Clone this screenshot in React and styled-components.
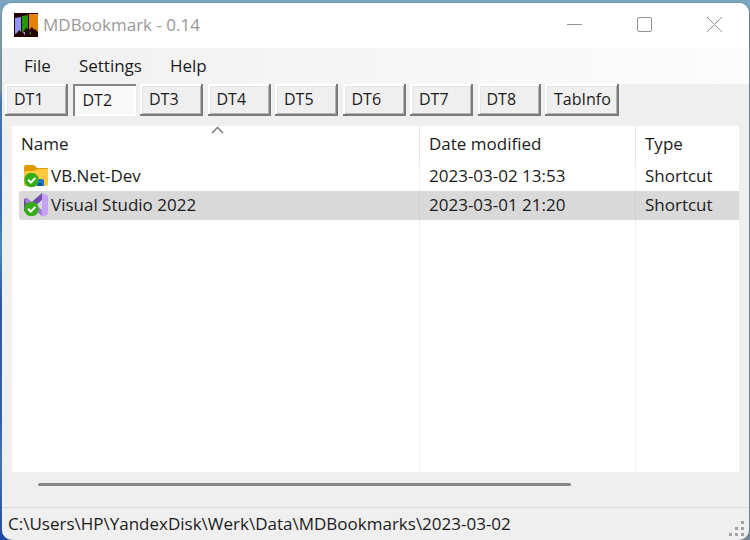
import React, { useState } from "react";
import styled, { createGlobalStyle } from "styled-components";

const GlobalStyle = createGlobalStyle`
  *, *::before, *::after { box-sizing: border-box; }
  body {
    margin: 0;
    font-family: "Open Sans", "Noto Sans", sans-serif;
    font-size: 17px;
    line-height: 24px;
    color: #1b1b1b;
  }
  button, input { font: inherit; color: inherit; }
`;

const Desktop = styled.div`
  display: flex;
  min-height: 100vh;
  padding: 3px 1px 0 2px;
  background: linear-gradient(180deg, #7ba6c2 0, #7ba6c2 12px, transparent 12px),
    linear-gradient(90deg, transparent 50%, #71889a 50%),
    linear-gradient(180deg, #7ba6c2 0, #7c929f 90px, #3c78bd 100px, #2c69b8 200px,
      #4090c4 250px, #2454ac 300px, #2c5cb8 420px, #3c77b8 460px, #1746a8 100%);
`;

const Window = styled.main`
  flex: 1;
  min-width: 0;
  display: flex;
  flex-direction: column;
  overflow: hidden;
  border-radius: 10px;
  background: #efefef;
  box-shadow: 0 0 2px #5e7585;
`;

const TitleBar = styled.header`
  display: flex;
  align-items: center;
  height: 45px;
  padding: 0 0 2px 12px;
  background: #fff;
`;

const Title = styled.h1`
  flex: 1;
  margin: 0 0 0 5px;
  font-size: 17px;
  font-weight: 400;
  line-height: 24px;
  color: #999;
`;

const CaptionButton = styled.button`
  display: grid;
  place-items: center;
  width: 70px;
  height: 43px;
  padding: 0;
  border: 0;
  background: transparent;
  color: #919191;
`;

const MenuBar = styled.nav`
  display: flex;
  height: 36px;
  padding-left: 12px;
  background: linear-gradient(90deg, #f0f0f0, #fcfcfc);
`;

const MenuButton = styled.button`
  padding: 0 10px;
  margin-right: 8px;
  border: 0;
  background: transparent;
`;

const TabStrip = styled.div`
  display: flex;
  justify-content: space-between;
  max-width: 614px;
  height: 32px;
  margin-left: 3px;
`;

const Tab = styled.button`
  width: ${(p) => (p.$wide ? 74 : 63)}px;
  padding: ${(p) => (p.$active ? "0 8px 0 10px" : "0 9px 2px")};
  border: 0;
  font-size: 16px;
  text-align: left;
  white-space: nowrap;
  background: ${(p) => (p.$active ? "#f8f8f8" : "#efefef")};
  box-shadow: ${(p) =>
    p.$active
      ? "inset 2px 2px #858585, inset -2px -2px #fff"
      : "inset -2px -2px #7b7b7b, inset 2px 2px #fff, inset -3px -3px #b4b4b4, inset 3px 3px #e5e5e5"};
`;

const ListPanel = styled.section`
  flex: 1;
  display: flex;
  margin: 10px 10px 0;
  padding-left: 7px;
  background: #fff;
`;

const FileTable = styled.table`
  width: 100%;
  table-layout: fixed;
  border-collapse: separate;
  border-spacing: 0;
`;

const Column = styled.col`
  width: ${(p) => p.$width};
`;

const HeadCell = styled.th`
  position: relative;
  height: 36px;
  padding: 0 0 1px ${(p) => (p.$first ? 2 : 9)}px;
  border-right: ${(p) => (p.$last ? "0" : "1px solid #e5e5e5")};
  text-align: left;
  font-weight: 400;
`;

const SortMark = styled.svg`
  position: absolute;
  top: 0;
  left: calc(50% - 8px);
`;

const Row = styled.tr`
  background: transparent;
`;

const Cell = styled.td`
  height: ${(p) => (p.$fill ? "auto" : "29px")};
  padding: 0 0 2px ${(p) => (p.$first ? 5 : 9)}px;
  border-right: ${(p) => (p.$last ? "0" : "1px solid")};
  border-color: ${(p) => (p.$selected ? "#cdd1d5" : "#eaf2f9")};
  border-radius: ${(p) => (p.$first ? "3px 0 0 3px" : "0")};
  white-space: nowrap;
  background: ${(p) => (p.$selected ? "#d9d9d9" : "transparent")};
`;

const FileName = styled.span`
  display: flex;
  align-items: center;
  gap: 3px;
`;

const ScrollTrack = styled.div`
  height: 35px;
  padding: 11px 36px 0;
`;

const ScrollThumb = styled.div`
  width: 79%;
  height: 3px;
  border-radius: 2px;
  background: #868886;
`;

const StatusBar = styled.footer`
  display: flex;
  justify-content: space-between;
  align-items: flex-end;
  height: 33px;
  padding: 0 3px 3px 6px;
  border-top: 1px solid #d9d9d9;
`;

const StatusText = styled.span`
  padding-bottom: 1px;
`;

function AppLogo() {
  return (
    <svg width="24" height="24" viewBox="0 0 24 24" aria-hidden="true">
      <path fill="#260000" d="M0 0h24v24H0z" />
      <path fill="#8f98ff" d="M1 5l6-1v15l-2-2-2 3-2 1z" />
      <path fill="#249600" d="M8 3l6-1v14l-2-1-2 3-2 2z" />
      <path fill="#e48100" d="M15 1h9v18l-3-3-1 1-2-3-3 3z" />
      <path fill="#8f98ff" d="M9 19h2v4z" />
      <path fill="#249600" d="M15 20l2-1v3z" />
    </svg>
  );
}

function SyncBadge() {
  return (
    <g>
      <circle cx="7.500" cy="16" r="7.300" fill="#34ad16" />
      <path d="M4 15.700l2.800 2.800 4.600-4.600" fill="none" stroke="#fff" strokeWidth="2" />
    </g>
  );
}

function FolderIcon() {
  return (
    <svg width="24" height="24" viewBox="0 0 24 24" aria-hidden="true">
      <path fill="#df9a00" d="M0 3q0-2 2-2h8l3 3h10q1 0 1 1v5H0z" />
      <path fill="#ffc83e" d="M0 9q0-2 2-2h8l4-2h10v15q0 2-2 2H0z" />
      <path fill="#1778cf" d="M13 15h5q2 0 2 2v5h-7z" />
      <path fill="#0753a0" d="M14 19h4v3h-4z" />
      <SyncBadge />
    </svg>
  );
}

function StudioIcon() {
  return (
    <svg width="24" height="24" viewBox="0 0 24 24" aria-hidden="true">
      <path fill="#6844a2" d="M0 6l3-1v14l-3-1z" />
      <path fill="#a579d9" d="M3 5l15 12v6L1 9V6z" />
      <path fill="#704cad" d="M1 15L18 0v7L4 19z" />
      <path fill="#c5a3f3" d="M18 0l5 2q1 1 1 2v16q0 1-1 2l-5 2z" />
      <SyncBadge />
    </svg>
  );
}

const captions = [
  ["Minimize", "M0 7.500h15"],
  ["Maximize", "M2 .5h11q1.500 0 1.500 1.500v11q0 1.500-1.500 1.500H2q-1.500 0-1.500-1.500V2Q.5.5 2 .5z"],
  ["Close", "M0 0l15 15M15 0L0 15"],
];

const tabs = ["DT1", "DT2", "DT3", "DT4", "DT5", "DT6", "DT7", "DT8", "TabInfo"];

const files = [
  { name: "VB.Net-Dev", date: "2023-03-02 13:53", type: "Shortcut", Icon: FolderIcon },
  { name: "Visual Studio 2022", date: "2023-03-01 21:20", type: "Shortcut", Icon: StudioIcon },
];

export default function App() {
  const [activeTab, setActiveTab] = useState("DT2");
  const [selected, setSelected] = useState("Visual Studio 2022");

  return (
    <Desktop>
      <GlobalStyle />
      <Window>
        <TitleBar>
          <AppLogo />
          <Title>MDBookmark - 0.14</Title>
          {captions.map(([label, path]) => (
            <CaptionButton key={label} aria-label={label}>
              <svg width="15" height="15" viewBox="0 0 15 15" fill="none" stroke="currentColor">
                <path d={path} />
              </svg>
            </CaptionButton>
          ))}
        </TitleBar>
        <MenuBar aria-label="Main menu">
          {["File", "Settings", "Help"].map((item) => (
            <MenuButton key={item}>{item}</MenuButton>
          ))}
        </MenuBar>
        <TabStrip role="tablist">
          {tabs.map((tab) => (
            <Tab
              key={tab}
              role="tab"
              aria-selected={activeTab === tab}
              $active={activeTab === tab}
              $wide={tab === "TabInfo"}
              onClick={() => setActiveTab(tab)}
            >
              {tab}
            </Tab>
          ))}
        </TabStrip>
        <ListPanel>
          <FileTable>
            <colgroup>
              <Column $width="401px" />
              <Column $width="216px" />
              <Column $width="auto" />
            </colgroup>
            <thead>
              <tr>
                <HeadCell $first scope="col" aria-sort="ascending">
                  Name
                  <SortMark width="13" height="8" viewBox="0 0 13 8" aria-hidden="true">
                    <path d="M1 7l5.500-5.500L12 7" fill="none" stroke="#777" strokeWidth="1.500" />
                  </SortMark>
                </HeadCell>
                <HeadCell scope="col">Date modified</HeadCell>
                <HeadCell $last scope="col">Type</HeadCell>
              </tr>
            </thead>
            <tbody>
              {files.map(({ name, date, type, Icon }) => {
                const on = selected === name;
                return (
                  <Row key={name} onClick={() => setSelected(name)}>
                    <Cell $first $selected={on}>
                      <FileName>
                        <Icon />
                        {name}
                      </FileName>
                    </Cell>
                    <Cell $selected={on}>{date}</Cell>
                    <Cell $last $selected={on}>{type}</Cell>
                  </Row>
                );
              })}
              <Row aria-hidden="true">
                <Cell $fill />
                <Cell $fill />
                <Cell $fill $last />
              </Row>
            </tbody>
          </FileTable>
        </ListPanel>
        <ScrollTrack>
          <ScrollThumb />
        </ScrollTrack>
        <StatusBar>
          <StatusText>{"C:\\Users\\HP\\YandexDisk\\Werk\\Data\\MDBookmarks\\2023-03-02"}</StatusText>
          <svg width="17" height="17" viewBox="0 0 17 17" fill="#a3a3a3" aria-hidden="true">
            <path d="M12 1h3v3h-3zM6 7h3v3H6zM12 7h3v3h-3zM0 13h3v3H0zM6 13h3v3H6zM12 13h3v3h-3z" />
          </svg>
        </StatusBar>
      </Window>
    </Desktop>
  );
}
